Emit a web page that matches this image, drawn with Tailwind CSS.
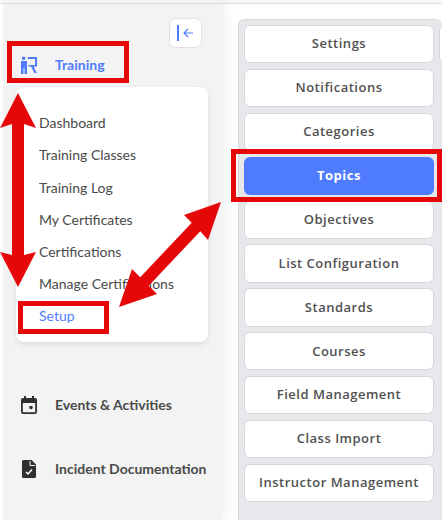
<!doctype html>
<html>
<head>
<meta charset="utf-8">
<script src="https://cdn.jsdelivr.net/npm/@tailwindcss/browser@4"></script>
</head>
<body class="bg-white">
<div class="relative flex h-[520px] w-[442px] flex-col overflow-hidden bg-white font-['Lato','Liberation_Sans',sans-serif]">
  <div class="h-[4px] shrink-0 border-b border-[#dcdcdc] bg-[#f7f7f7]"></div>
  <div class="flex min-h-0 flex-1 pl-[3px]">
    <aside class="flex w-[220px] shrink-0 flex-col bg-[#f3f3f3] shadow-[4px_0_10px_rgba(0,0,0,0.05)]">
      <button class="mt-[14px] mr-[21px] flex h-[30px] w-[33px] items-center justify-center self-end rounded-[7px] border border-[#e2e2e2] bg-white">
        <svg width="20" height="18" viewBox="0 0 20 18" fill="none" stroke="#4f7cff">
          <path d="M2 1v16" stroke-width="2"/>
          <path d="M17 9H8M12 5L8 9l4 4" stroke-width="1.2"/>
        </svg>
      </button>
      <div class="flex h-[34px] items-center pl-[18px] text-[14px] font-bold text-[#4f7cff]">
        <svg class="mr-[18px] shrink-0" width="16" height="18" viewBox="0 0 16 18" fill="#4f7cff">
          <circle cx="2.6" cy="2.2" r="1.8"/>
          <path d="M0 5h6v13H3.5v-6h-1v6H0z"/>
          <path d="M6.8 1H16v9.5h-3.5l3.3 6.5h-2.4l-3.4-6.5H7.5V9h6.6V3H6.8z"/>
        </svg>
        <span class="pb-[2px]">Training</span>
      </div>
      <nav class="mt-[5px] ml-[13px] h-[255px] w-[192px] rounded-[8px] bg-white pt-[19.6px] pl-[23px] text-[14px] text-[#4a4a4a] shadow-[0_2px_6px_rgba(0,0,0,0.10)]">
        <div class="flex h-[32.2px] items-center">Dashboard</div>
        <div class="flex h-[32.2px] items-center">Training Classes</div>
        <div class="flex h-[32.2px] items-center">Training Log</div>
        <div class="flex h-[32.2px] items-center">My Certificates</div>
        <div class="flex h-[32.2px] items-center">Certifications</div>
        <div class="flex h-[32.2px] items-center">Manage Certifications</div>
        <div class="flex h-[32.2px] items-center text-[#4f7cff]">Setup</div>
      </nav>
      <div class="mt-[43px] flex h-[40px] items-center pl-[18px] text-[14px] font-bold text-[#4a4a4a]">
        <svg class="mr-[18px] shrink-0" width="16" height="18" viewBox="0 0 16 18">
          <path fill="#2f2f2f" d="M3 0h2v2h6V0h2v2h1a2 2 0 0 1 2 2v12a2 2 0 0 1-2 2H2a2 2 0 0 1-2-2V4a2 2 0 0 1 2-2h1zM1.8 7v9.2h12.4V7z"/>
          <circle cx="10" cy="11.5" r="1.8" fill="#2f2f2f"/>
        </svg>
        <span class="pb-[2px]">Events &amp; Activities</span>
      </div>
      <div class="mt-[24px] flex h-[40px] items-center pl-[19px] text-[14px] font-bold text-[#4a4a4a]">
        <svg class="mr-[19px] shrink-0" width="14" height="18" viewBox="0 0 14 18">
          <path fill="#2f2f2f" d="M1.5 0H9.5L14 4.5v12a1.5 1.5 0 0 1-1.5 1.5h-11A1.5 1.5 0 0 1 0 16.5v-15A1.5 1.5 0 0 1 1.5 0z"/>
          <path d="M4 12l2 2 4-4.5" fill="none" stroke="#ffffff" stroke-width="1.5"/>
          <path d="M8 1v4.5h5" fill="none" stroke="#f3f3f3" stroke-width="1"/>
        </svg>
        <span class="pb-[2px]">Incident Documentation</span>
      </div>
    </aside>
    <main class="min-w-0 flex-1 pt-[15px] pl-[15px]">
      <div class="flex h-full gap-[5px] overflow-hidden rounded-t-[6px] border-t border-l border-[#d6d8dc] bg-[#e6e8ec] pt-[5.1px] pl-[5px] font-['Open_Sans','Liberation_Sans',sans-serif] text-[13px] font-semibold tracking-[0.5px] text-[#505050]">
        <div class="flex w-[190px] shrink-0 flex-col gap-[5.7px]">
          <div class="flex h-[38.2px] items-center justify-center rounded-[6px] border border-[#d4d6da] bg-white">Settings</div>
          <div class="flex h-[38.2px] items-center justify-center rounded-[6px] border border-[#d4d6da] bg-white">Notifications</div>
          <div class="flex h-[38.2px] items-center justify-center rounded-[6px] border border-[#d4d6da] bg-white">Categories</div>
          <div class="flex h-[38.2px] items-center justify-center rounded-[6px] bg-[#4f7cff] font-bold text-white">Topics</div>
          <div class="flex h-[38.2px] items-center justify-center rounded-[6px] border border-[#d4d6da] bg-white">Objectives</div>
          <div class="flex h-[38.2px] items-center justify-center rounded-[6px] border border-[#d4d6da] bg-white">List Configuration</div>
          <div class="flex h-[38.2px] items-center justify-center rounded-[6px] border border-[#d4d6da] bg-white">Standards</div>
          <div class="flex h-[38.2px] items-center justify-center rounded-[6px] border border-[#d4d6da] bg-white">Courses</div>
          <div class="flex h-[38.2px] items-center justify-center rounded-[6px] border border-[#d4d6da] bg-white">Field Management</div>
          <div class="flex h-[38.2px] items-center justify-center rounded-[6px] border border-[#d4d6da] bg-white">Class Import</div>
          <div class="flex h-[38.2px] items-center justify-center rounded-[6px] border border-[#d4d6da] bg-white">Instructor Management</div>
        </div>
        <div class="h-[38px] w-[20px] shrink-0 rounded-[6px] border border-[#d4d6da] bg-white"></div>
      </div>
    </main>
  </div>
  <div class="pointer-events-none absolute top-[41px] left-[7px] h-[42px] w-[122px] border-[5px] border-[#e60808]"></div>
  <div class="pointer-events-none absolute top-[301px] left-[18px] h-[33px] w-[91px] border-[5px] border-[#e60808]"></div>
  <div class="pointer-events-none absolute top-[149px] left-[231px] h-[53px] w-[211px] border-[5px] border-[#e60808]"></div>
  <svg class="pointer-events-none absolute top-0 left-0" width="442" height="520" viewBox="0 0 442 520">
    <polygon fill="#e60808" points="18,93 36,128 24,124 24,255 36,252 18,287 0,252 12,255 12,124 0,128"/>
    <polygon fill="#e60808" points="221,202 184,215 191.7,222.8 140.2,277.3 132,269 119,307 157,294 148.8,285.7 200.3,231.2 208,240"/>
  </svg>
</div>
</body>
</html>
